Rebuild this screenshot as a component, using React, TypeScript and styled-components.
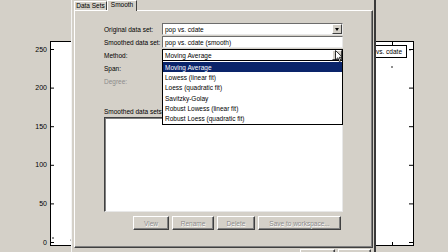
import React, { ReactElement } from 'react'
import styled, { createGlobalStyle } from 'styled-components'

const GlobalStyle = createGlobalStyle`
  html, body {
    margin: 0;
    padding: 0;
    background: #d4d0c8;
  }
  body {
    font-family: 'Liberation Sans', Arial, sans-serif;
  }
`

const Screen = styled.div`
  position: relative;
  width: 448px;
  height: 252px;
  overflow: hidden;
  background: #d4d0c8;
`

const Chart = styled.svg`
  display: block;
`

const Window = styled.div`
  position: absolute;
  left: 71px;
  top: -2px;
  width: 305px;
  height: 272px;
  box-sizing: border-box;
  background: #d4d0c8;
  border-left: 1px solid #f4f4f4;
  border-right: 2px solid #3a3a3a;
  padding: 2px 1px 0 2px;
  display: flex;
  flex-direction: column;
  font-size: 6.5px;
  color: #000;
`

const TabRow = styled.div`
  display: flex;
  align-items: flex-end;
  height: 10px;
  position: relative;
  z-index: 1;
`

const Tab = styled.div<{ $active?: boolean; $width: number }>`
  box-sizing: border-box;
  width: ${p => p.$width}px;
  height: ${p => (p.$active ? 11 : 9)}px;
  margin-bottom: ${p => (p.$active ? -1 : 0)}px;
  background: #d4d0c8;
  border-top: 1px solid #fff;
  border-left: 1px solid #fff;
  border-right: 1px solid #404040;
  display: flex;
  align-items: center;
  justify-content: center;
  line-height: 1;
  padding-bottom: ${p => (p.$active ? 2 : 0)}px;
`

const TabPanel = styled.div`
  flex: none;
  height: 238px;
  box-sizing: border-box;
  border-top: 1px solid #fff;
  border-left: 1px solid #fff;
  border-right: 1px solid #404040;
  border-bottom: 1px solid #404040;
  box-shadow: inset -1px -1px 0 #808080;
  padding: 12px 0 0 29px;
`

const Form = styled.div`
  display: grid;
  grid-template-columns: 58px 181px;
  grid-auto-rows: 12px;
  row-gap: 1px;
`

const Label = styled.div<{ $disabled?: boolean }>`
  display: flex;
  align-items: center;
  white-space: nowrap;
  color: ${p => (p.$disabled ? '#8c8c8c' : '#000')};
`

const FieldWrap = styled.div`
  position: relative;
`

const Field = styled.div<{ $focused?: boolean }>`
  height: 12px;
  box-sizing: border-box;
  background: #fff;
  border: 1px solid;
  border-color: ${p => (p.$focused ? '#000' : '#6c6c6c #e8e8e8 #e8e8e8 #6c6c6c')};
  display: flex;
  align-items: center;
  padding-left: 2px;
  white-space: nowrap;
  overflow: hidden;
`

const FieldText = styled.span`
  flex: 1;
`

const ArrowButton = styled.div`
  flex: none;
  width: 10px;
  height: 100%;
  box-sizing: border-box;
  background: #d4d0c8;
  border-top: 1px solid #fff;
  border-left: 1px solid #fff;
  border-right: 1px solid #404040;
  border-bottom: 1px solid #404040;
  display: flex;
  align-items: center;
  justify-content: center;

  &::after {
    content: '';
    border-left: 2.5px solid transparent;
    border-right: 2.5px solid transparent;
    border-top: 3px solid #000;
  }
`

const DropList = styled.div`
  position: absolute;
  top: 12px;
  left: 0;
  width: 100%;
  box-sizing: border-box;
  background: #fff;
  border: 1px solid #000;
  border-top: none;
  padding-top: 1px;
  z-index: 2;
`

const DropItem = styled.div<{ $selected?: boolean }>`
  height: 10.3px;
  display: flex;
  align-items: center;
  padding-left: 2px;
  white-space: nowrap;
  background: ${p => (p.$selected ? '#0a246a' : 'transparent')};
  color: ${p => (p.$selected ? '#fff' : '#000')};
`

const SetsLabel = styled.div`
  margin-top: 20px;
  height: 9px;
  line-height: 9px;
  white-space: nowrap;
`

const ListBox = styled.div`
  margin-top: 1px;
  width: 239px;
  height: 95px;
  box-sizing: border-box;
  background: #fff;
  border: 1px solid;
  border-color: #404040 #e8e8e8 #e8e8e8 #404040;
  box-shadow: inset 1px 1px 0 #808080;
`

const ButtonRow = styled.div`
  margin-top: 4px;
  width: 237px;
  display: flex;
  justify-content: flex-end;
  gap: 3px;
`

const Button = styled.div<{ $width: number }>`
  width: ${p => p.$width}px;
  height: 14px;
  box-sizing: border-box;
  background: #d4d0c8;
  border-top: 1px solid #fff;
  border-left: 1px solid #fff;
  border-right: 1px solid #404040;
  border-bottom: 1px solid #404040;
  box-shadow: inset -1px -1px 0 #808080;
  display: flex;
  align-items: center;
  justify-content: center;
  color: #8a8a8a;
  text-shadow: 0.5px 0.5px 0 #fff;
  white-space: nowrap;
`

const Footer = styled.div`
  margin-top: 1px;
  display: flex;
  justify-content: flex-end;
  gap: 3px;
  padding-right: 2px;
`

const Cursor = styled.svg`
  position: absolute;
  left: 335px;
  top: 50px;
  z-index: 5;
`

const ticks = [0, 50, 100, 150, 200, 250]
const tickY = (v: number) => 242 - (v * 193) / 250

const methods = [
  'Moving Average',
  'Lowess (linear fit)',
  'Loess (quadratic fit)',
  'Savitzky-Golay',
  'Robust Lowess (linear fit)',
  'Robust Loess (quadratic fit)',
]

const Figure = (): ReactElement => (
  <Chart width={448} height={252} viewBox='0 0 448 252'>
    <rect x={50.5} y={41.5} width={363} height={204} fill='#fff' stroke='#000' strokeWidth={1} />
    {ticks.map(v => (
      <g key={v}>
        <line x1={50} x2={54} y1={tickY(v) + 0.5} y2={tickY(v) + 0.5} stroke='#000' />
        <line x1={409} x2={413} y1={tickY(v) + 0.5} y2={tickY(v) + 0.5} stroke='#000' />
        <text
          x={47}
          y={tickY(v) + 2.6}
          textAnchor='end'
          fontSize={7}
          fontFamily='Liberation Sans, Arial, sans-serif'
          fill='#000'
        >
          {v}
        </text>
      </g>
    ))}
    <line x1={392.5} x2={392.5} y1={42} y2={45} stroke='#000' />
    <line x1={392.5} x2={392.5} y1={242} y2={245} stroke='#000' />
    <circle cx={53} cy={238} r={0.8} fill='#000' />
    <circle cx={71} cy={240} r={0.6} fill='#000' />
    <circle cx={392} cy={67} r={0.8} fill='#000' />
    <circle cx={410} cy={50} r={0.6} fill='#000' />
    <rect x={336.5} y={45.5} width={70} height={12} fill='#fff' stroke='#000' />
    <text
      x={402}
      y={54}
      textAnchor='end'
      fontSize={6.5}
      fontFamily='Liberation Sans, Arial, sans-serif'
      fill='#000'
    >
      pop vs. cdate
    </text>
  </Chart>
)

const App = (): ReactElement => (
  <Screen>
    <GlobalStyle />
    <Figure />

    <Window>
      <TabRow>
        <Tab $width={33}>Data Sets</Tab>
        <Tab $width={30} $active>
          Smooth
        </Tab>
      </TabRow>

      <TabPanel>
        <Form>
          <Label>Original data set:</Label>
          <Field>
            <FieldText>pop vs. cdate</FieldText>
            <ArrowButton />
          </Field>

          <Label>Smoothed data set:</Label>
          <Field>
            <FieldText>pop vs. cdate (smooth)</FieldText>
          </Field>

          <Label>Method:</Label>
          <FieldWrap>
            <Field $focused>
              <FieldText>Moving Average</FieldText>
              <ArrowButton />
            </Field>
            <DropList>
              {methods.map((m, i) => (
                <DropItem key={m} $selected={i === 0}>
                  {m}
                </DropItem>
              ))}
            </DropList>
          </FieldWrap>

          <Label>Span:</Label>
          <Field />

          <Label $disabled>Degree:</Label>
          <Field />
        </Form>

        <SetsLabel>Smoothed data sets:</SetsLabel>
        <ListBox />

        <ButtonRow>
          <Button $width={36}>View</Button>
          <Button $width={42}>Rename</Button>
          <Button $width={38}>Delete</Button>
          <Button $width={83}>Save to workspace...</Button>
        </ButtonRow>
      </TabPanel>

      {/* only the tops of these two buttons show below the panel */}
      <Footer>
        <Button $width={35} />
        <Button $width={33} />
      </Footer>
    </Window>

    <Cursor width={9} height={13} viewBox='0 0 9 13'>
      <path d='M0.5 0.5 L0.5 10 L2.8 7.8 L4.4 11.6 L5.8 11 L4.3 7.3 L7.5 7.3 Z' fill='#fff' stroke='#000' strokeWidth={0.8} />
    </Cursor>
  </Screen>
)

export default App
